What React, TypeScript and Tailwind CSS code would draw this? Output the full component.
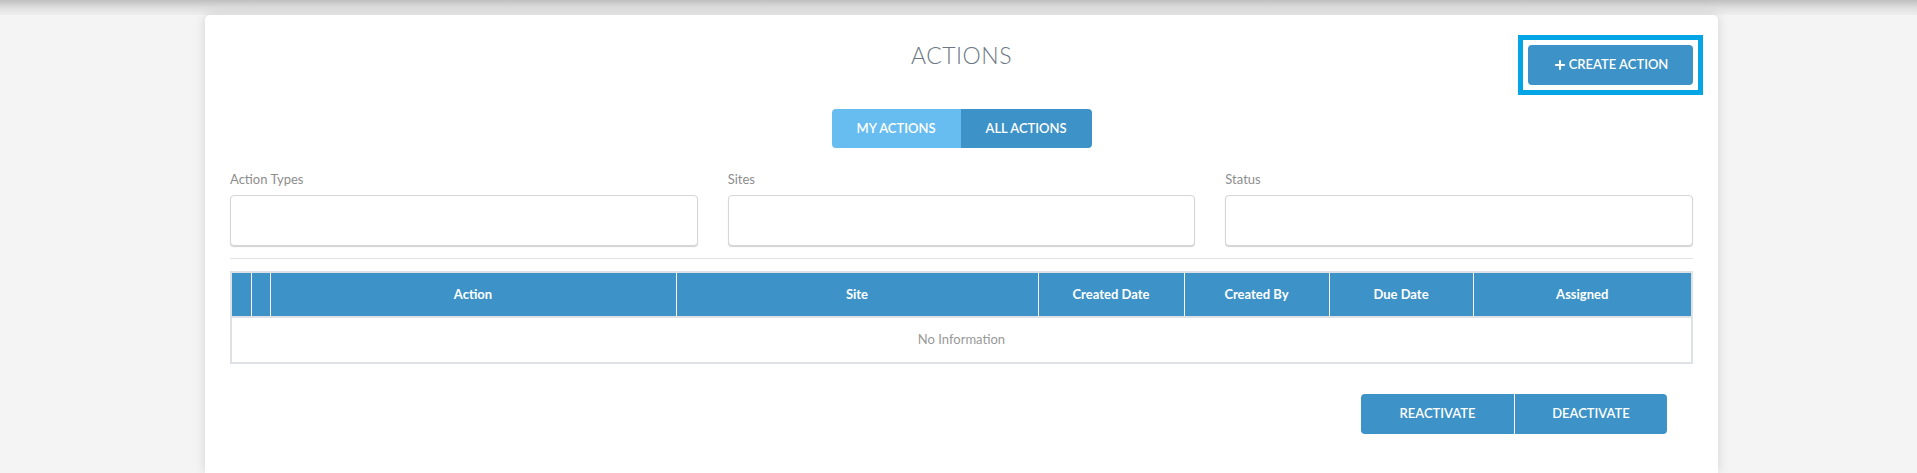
import { Plus } from "lucide-react";

const cols = [
  { label: "", w: "w-[20px]" },
  { label: "", w: "w-[19px]" },
  { label: "Action", w: "w-[406px]" },
  { label: "Site", w: "w-[362px]" },
  { label: "Created Date", w: "w-[146px]" },
  { label: "Created By", w: "w-[145px]" },
  { label: "Due Date", w: "w-[144px]" },
  { label: "Assigned", w: "w-[219px]" },
];

function Field({ label }: { label: string }) {
  return (
    <div className="flex flex-col">
      <label className="text-[13px] leading-[13px] text-[#8d8d8d]">{label}</label>
      <div className="mt-[9px] h-[51px] rounded-[4px] border border-[#d6d6d6] bg-white shadow-[0_1px_1px_rgba(0,0,0,0.18)]" />
    </div>
  );
}

export default function App() {
  return (
    <div className="min-h-screen bg-[#f4f4f4] font-['Lato',sans-serif] overflow-hidden">
      <div className="h-[15px] bg-linear-to-b from-[#bfbfbf] via-[#dedede] to-[#efefef]" />
      <div className="ml-[205px] w-[1513px] min-h-[458px] rounded-t-[5px] bg-white px-[25px] pt-[30px] shadow-[0_0_12px_rgba(0,0,0,0.13)]">
        {/* header */}
        <div className="grid grid-cols-[1fr_auto_1fr] items-start">
          <div />
          <h1 className="-mt-px text-[23px] leading-none font-light tracking-[0.5px] text-[#6b7884]">ACTIONS</h1>
          <div className="flex justify-end">
            {/* focus frame */}
            <div className="-m-[10px] border-[5px] border-[#03a5e5] p-[5px]">
              <button
                type="button"
                className="flex h-[40px] w-[165px] items-center justify-center gap-[2px] rounded-[4px] bg-[#3d92c7] text-[13px] font-semibold text-white"
              >
                <Plus size={14} strokeWidth={3.5} />
                CREATE ACTION
              </button>
            </div>
          </div>
        </div>

        {/* toggle */}
        <div className="mt-[24px] flex justify-center">
          <div className="flex overflow-hidden rounded-[4px] text-[13px] font-semibold text-white">
            <button type="button" className="h-[39px] w-[129px] bg-[#68bdf0]">MY ACTIONS</button>
            <button type="button" className="h-[39px] w-[131px] bg-[#3d92c7]">ALL ACTIONS</button>
          </div>
        </div>

        {/* filters */}
        <div className="mt-[25px] grid grid-cols-3 gap-[30px]">
          <Field label="Action Types" />
          <Field label="Sites" />
          <Field label="Status" />
        </div>

        <div className="mt-[12px] border-t border-[#e2e2e2]" />

        {/* table */}
        <table className="mt-[12px] w-[1461px] table-fixed border-collapse border-2 border-[#dee2e7]">
          <thead>
            <tr className="h-[45px] bg-[#3d92c7]">
              {cols.map((c, i) => (
                <th
                  key={i}
                  className={`${c.w} border-l border-white first:border-l-0 text-center text-[13px] font-bold text-white`}
                >
                  {c.label}
                </th>
              ))}
            </tr>
          </thead>
          <tbody>
            <tr className="h-[46px] border-t-2 border-[#dee2e7]">
              <td colSpan={8} className="text-center text-[13px] text-[#999999]">
                No Information
              </td>
            </tr>
          </tbody>
        </table>

        {/* bottom buttons */}
        <div className="mt-[30px] mr-[26px] flex justify-end">
          <div className="flex gap-px overflow-hidden rounded-[4px] text-[13px] font-semibold text-white">
            <button type="button" className="h-[40px] w-[153px] bg-[#3d92c7]">REACTIVATE</button>
            <button type="button" className="h-[40px] w-[152px] bg-[#3d92c7]">DEACTIVATE</button>
          </div>
        </div>
      </div>
    </div>
  );
}
